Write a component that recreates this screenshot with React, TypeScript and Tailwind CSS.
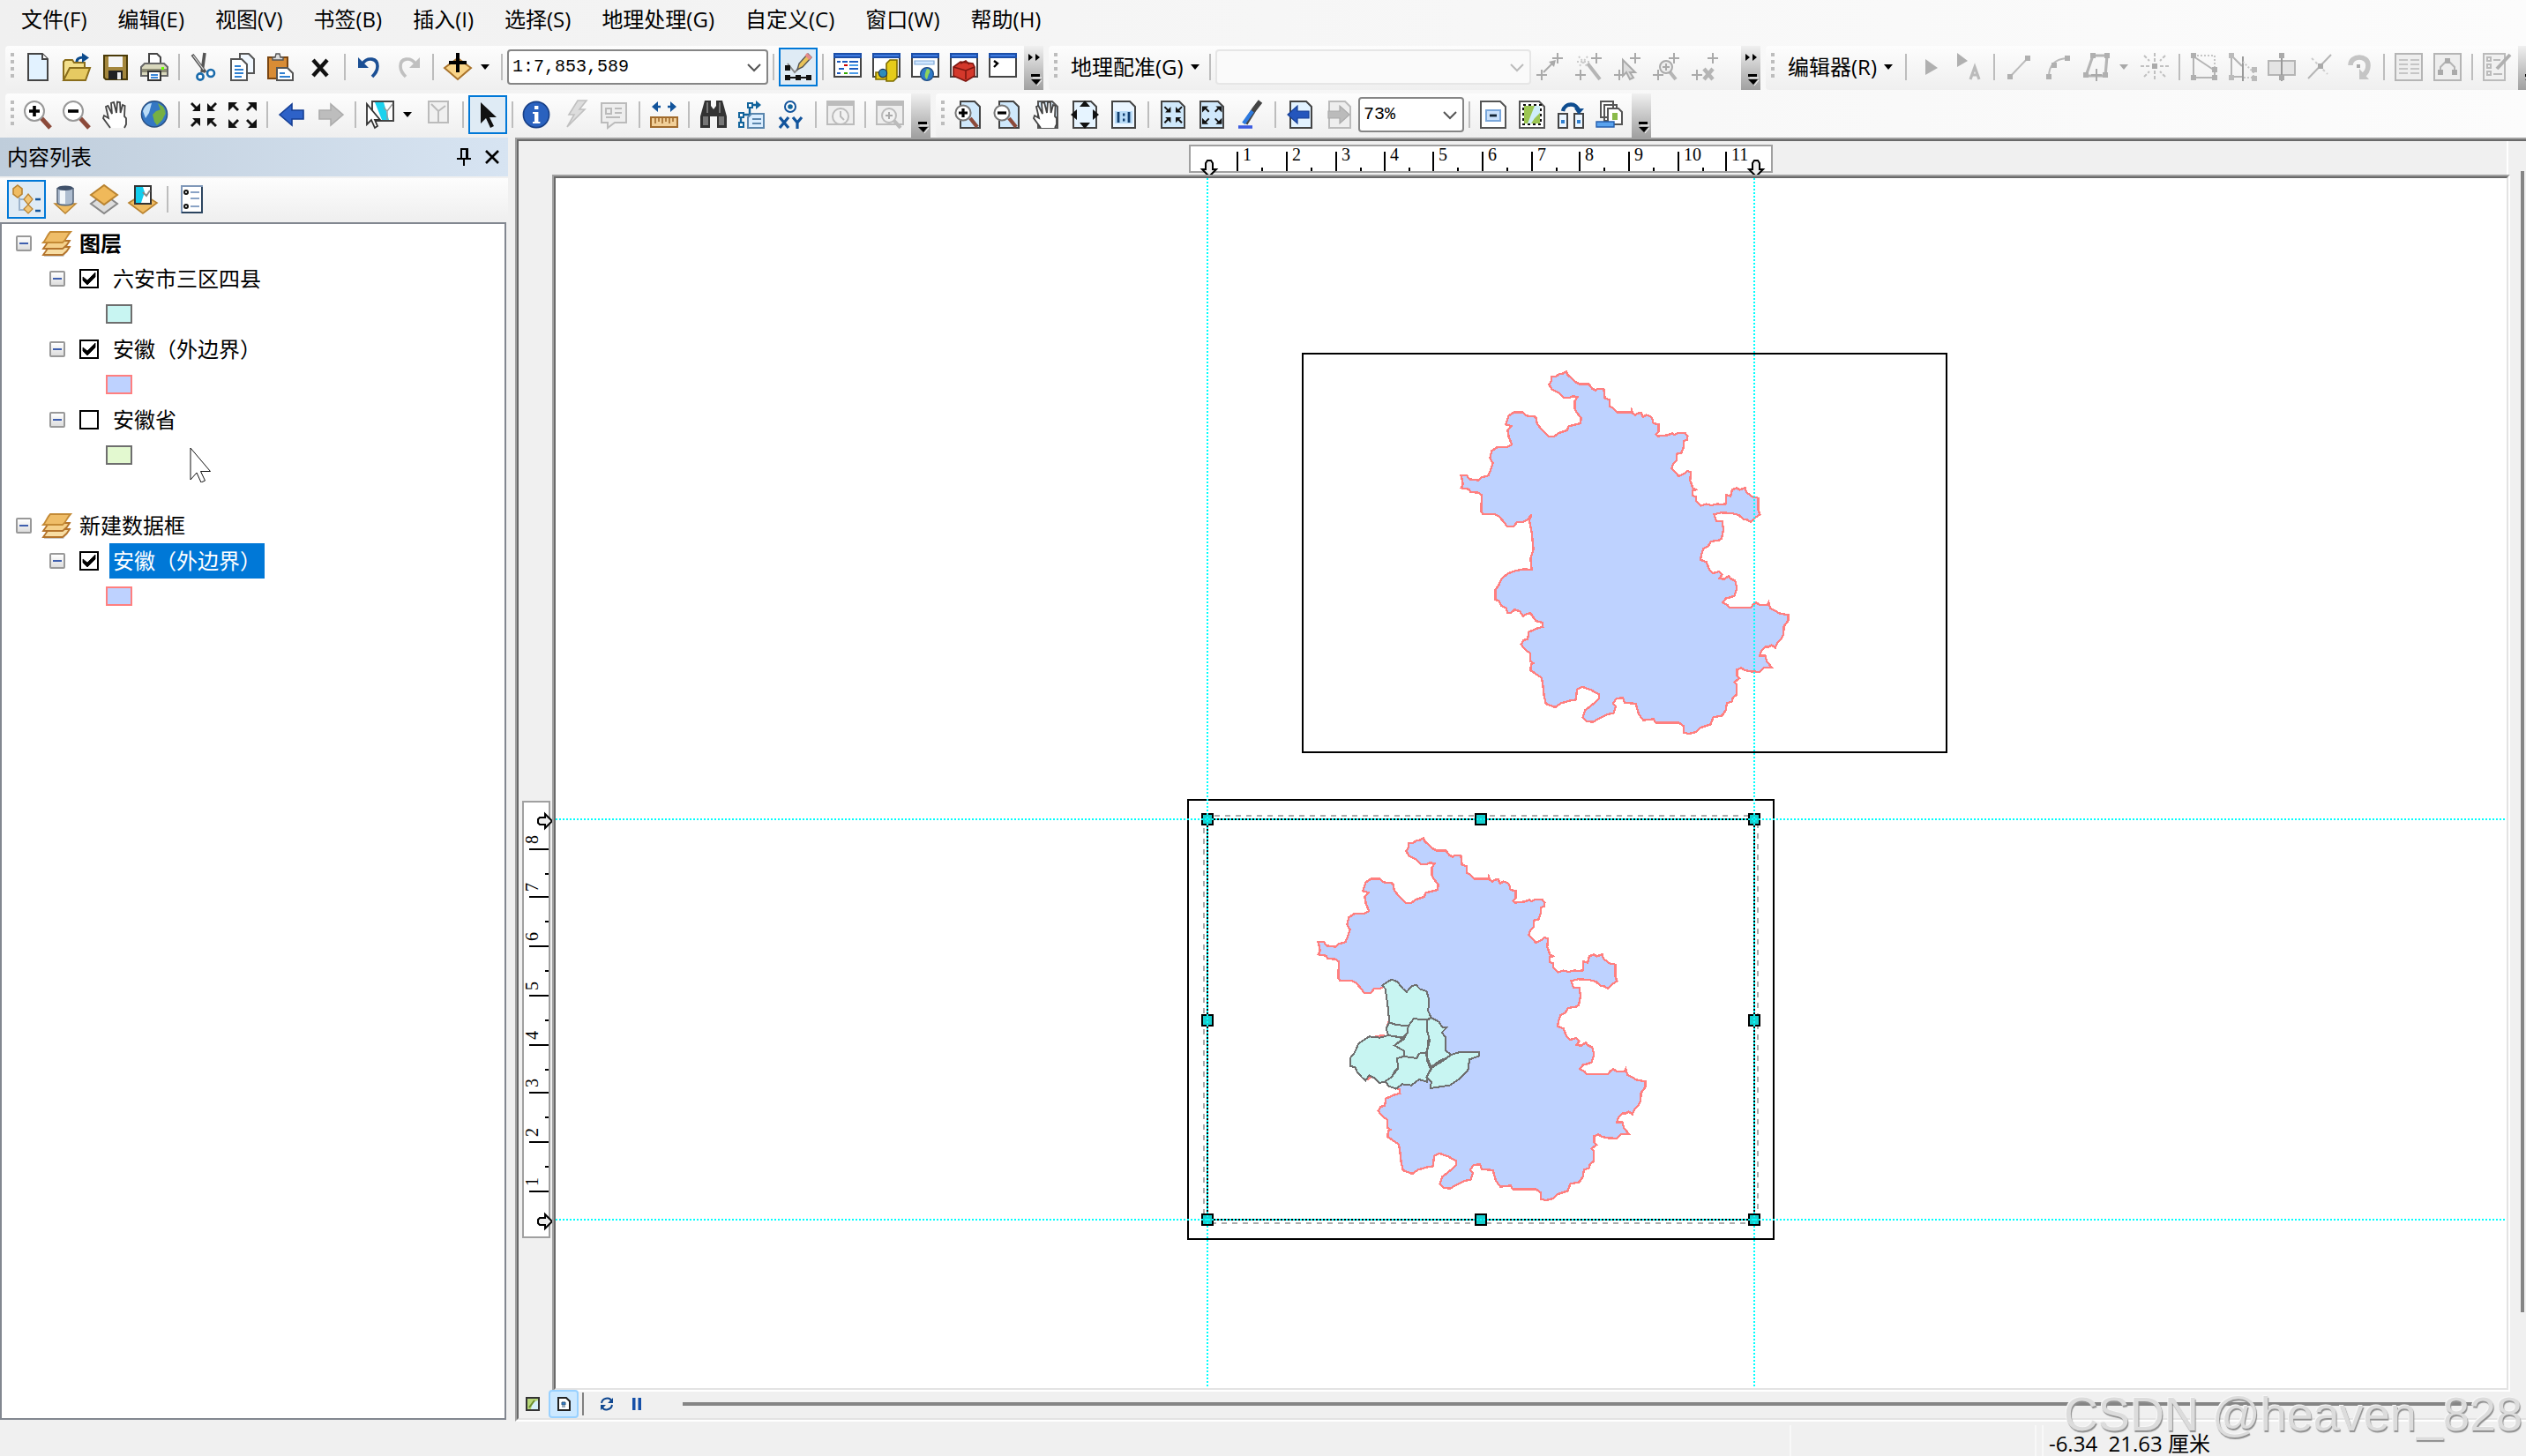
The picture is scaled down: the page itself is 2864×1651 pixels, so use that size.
import { ReactNode, useState } from "react";

const ANHUI =
  "M349,108 356,98 356,82 372,80 386,72 398,70 407,64 413,76 427,88 440,100 452,106 484,106 496,122 508,128 514,123 535,123 539,154 554,160 554,182 566,188 580,202 628,202 630,195 634,206 643,212 650,206 662,204 668,218 680,212 692,216 700,224 704,240 721,244 721,268 712,278 718,284 736,282 752,280 768,274 774,280 790,272 812,274 820,284 818,296 808,300 806,322 800,340 784,344 782,368 772,378 765,394 778,406 790,420 810,410 820,402 831,406 829,434 838,460 848,466 836,470 836,486 848,490 850,506 866,520 884,515 902,519 922,514 932,516 950,514 952,484 966,488 972,466 986,460 998,466 1016,460 1020,474 1040,490 1060,494 1060,534 1066,550 1052,560 1036,576 1022,568 1010,566 994,552 970,546 934,544 910,550 918,572 938,574 942,600 936,632 926,638 900,642 890,658 874,666 868,684 864,704 884,712 894,738 906,750 928,744 938,754 928,768 944,770 960,760 966,768 982,776 988,800 980,826 966,832 950,836 940,850 956,858 962,866 1036,866 1044,856 1054,850 1066,858 1092,858 1096,850 1102,870 1124,880 1130,886 1162,892 1162,912 1148,930 1146,958 1138,974 1126,986 1118,1004 1106,994 1098,1000 1086,1000 1072,1012 1066,1030 1084,1030 1090,1050 1106,1070 1080,1072 1066,1086 1036,1084 1016,1080 1002,1072 988,1078 988,1100 996,1108 980,1120 988,1128 986,1164 974,1174 972,1186 954,1192 950,1216 938,1234 908,1240 898,1264 862,1276 850,1290 824,1296 808,1292 806,1270 790,1258 712,1258 704,1246 670,1250 654,1230 644,1194 606,1190 600,1174 578,1176 566,1194 576,1204 568,1226 548,1230 508,1250 500,1256 478,1254 464,1240 472,1216 508,1188 520,1176 518,1162 490,1146 476,1142 462,1136 444,1146 440,1180 418,1184 390,1192 370,1206 338,1194 332,1166 328,1130 324,1106 306,1094 286,1080 288,1060 296,1056 286,1050 284,1022 266,1008 254,992 262,978 276,974 280,950 308,938 328,932 326,918 304,912 286,886 274,888 260,896 250,880 232,874 220,884 208,884 202,868 186,860 178,844 166,840 166,808 178,790 188,768 208,752 226,744 262,736 290,738 286,700 296,670 294,650 290,612 282,570 290,550 276,568 260,576 240,576 230,590 206,590 194,574 178,556 166,550 124,548 118,540 120,484 108,476 82,474 76,464 50,460 56,446 50,418 68,416 78,430 110,434 120,424 142,418 150,400 158,376 148,358 154,334 172,322 208,320 222,312 212,286 208,264 222,250 202,244 212,214 230,202 260,202 272,214 304,218 308,240 322,260 346,284 368,284 380,274 410,264 416,250 440,244 456,240 458,222 442,202 436,190 436,166 446,150 430,148 420,152 398,152 382,136 358,124Z";

const DISTRICTS = [
  "M524,652 538,640 548,632 564,640 578,664 588,674 600,656 612,650 622,664 640,672 646,700 644,740 652,762 640,768 606,766 594,790 560,786 542,778 540,740 536,700 532,664Z",
  "M542,778 534,800 540,822 578,830 590,812 592,790 560,786Z",
  "M540,822 518,830 490,826 462,850 452,880 440,900 440,926 454,932 458,946 470,964 480,976 490,958 504,968 516,984 530,980 548,968 556,944 568,930 562,900 580,894 582,876 556,856 580,832Z",
  "M590,812 592,790 606,766 640,768 646,800 644,850 640,880 620,884 614,900 582,894 582,876 556,856 580,836Z",
  "M652,762 672,776 682,796 692,796 680,812 690,830 690,874 704,888 690,900 672,910 652,930 642,900 642,870 648,840 640,800 642,770Z",
  "M562,900 582,894 614,900 620,884 638,880 642,910 650,936 640,964 640,980 620,972 600,992 576,988 560,1004 540,994 532,978 548,964 566,934Z",
  "M704,888 724,880 777,880 777,892 752,904 748,940 724,972 700,992 650,1002 652,980 640,964 654,932 690,902Z",
];

const windowBox = (
  <>
    <path d="M.5 1.5h15v12H.5z" fill="#fff" stroke="#444" />
    <path d="M0 0h16v3H0z" fill="#1c4fa8" />
    <path d="M1 1h14v1H1z" fill="#3f7be0" />
  </>
);
const grayWindow = (
  <>
    <path d="M.5 1.5h15v12H.5z" fill="#eee" stroke="#bbb" />
    <path d="M0 0h16v3H0z" fill="#bcbcbc" />
  </>
);
const arrowsIn = (
  <path d="M6 6H1.5L3 4.500.5 2l1-1L4 3.500 6 1.500zM10 6h4.500L13 4.500 15.500 2l-1-1L12 3.500 10 1.500zM6 10H1.500L3 11.500.5 14l1 1L4 12.500 6 14.500zM10 10h4.500L13 11.500l2.500 2.500-1 1-2.500-2.500-2 2z" />
);
const arrowsOut = (
  <path d="M0 1h5L3.500 2.500 6 5 5 6 2.500 3.500 0 6zM16 1h-5l1.500 1.500L10 5l1 1 2.500-2.500L16 6zM0 15.500h5L3.500 14 6 11.500l-1-1L2.500 13 0 10.500zM16 15.500h-5l1.500-1.500-2.500-2.500 1-1 2.500 2.500 2.500-2.500z" />
);
const hand = (
  <path
    d="M5 15.500L1 10l.5-1.500L4 10 2.500 3.500l1.200-.5L6 7.500 5.500 1.500 7 1l1.500 6L9 .8l1.500.2.3 6L12 2.500l1.300.5-.3 6 1 1v3.500l-1 2"
    fill="#fff"
    stroke="#444"
    strokeWidth=".9"
  />
);
const control = <path d="M9 3h6M12 0v6M0 12.500h6M3 9.500v6" stroke="#aaa" />;

const icons: Record<string, ReactNode> = {
  newDoc: (
    <>
      <path d="M2.500.5h8l3 3v12h-11z" fill="#e2f2ff" stroke="#444" />
      <path d="M10.500.5v3h3" fill="#fff" stroke="#444" />
    </>
  ),
  open: (
    <>
      <path d="M.5 15V5l1-1h4l1 1.500h6V8" fill="#f3df8b" stroke="#8a6d1b" />
      <path d="M.5 15.500L4 8.500h11.500l-2.500 7z" fill="#e6ca62" stroke="#8a6d1b" />
      <path d="M8 5c0-2 2-2.500 4-2.500" fill="none" stroke="#0b4a8c" strokeWidth="1.600" />
      <path d="M11 0l4 2.700L11 5.500z" fill="#0b4a8c" />
    </>
  ),
  save: (
    <>
      <path d="M1.500 1.500h13v13.500h-12l-1-1z" fill="#a3863c" stroke="#4a3a08" />
      <path d="M4 2h8v6H4z" fill="#f5f5f5" />
      <path d="M4 10h8v5H4z" fill="#222" />
      <path d="M9 11h2v4H9z" fill="#eee" />
    </>
  ),
  print: (
    <>
      <path d="M5 7V.5h4.500l2 2V7" fill="#fff" stroke="#444" />
      <path d="M.5 8l2-2h11l2 2v5H.5z" fill="#d9d8bd" stroke="#666" />
      <path d="M1 9h14v2H1z" fill="#8d8c75" />
      <path d="M4.500 10.500h7v5h-7z" fill="#fff" stroke="#333" />
      <path d="M6 12.500h4M6 14h4" stroke="#3b87d8" />
      <path d="M12 8h1.500v1.500H12z" fill="#6f0" />
    </>
  ),
  cut: (
    <>
      <path d="M1.500 1L9 11M8.500 0L7 11" stroke="#555" strokeWidth="1.800" />
      <path d="M2 1.500l6 8" stroke="#ddd" strokeWidth=".6" />
      <circle cx="6" cy="13.500" r="1.800" fill="#fff" stroke="#1a6bab" strokeWidth="1.300" />
      <circle cx="12" cy="11.500" r="2" fill="#fff" stroke="#1a6bab" strokeWidth="1.300" />
    </>
  ),
  copy: (
    <>
      <path d="M6.500.5h5l3 3v8h-8z" fill="#f1f8ff" stroke="#555" />
      <path d="M1.500 3.500h6l3 3v9h-9z" fill="#fff" stroke="#555" />
      <path d="M3.500 7.500H7M3.500 9.500h5M3.500 11.500h5M3.500 13.500h4" stroke="#2f7fd0" />
    </>
  ),
  paste: (
    <>
      <path d="M.5 2.500h11v12H.5z" fill="#d98c35" stroke="#7a4510" />
      <path d="M3 4V2.500h1.500L5 .5h2l.5 2H9V4z" fill="#ddd" stroke="#555" strokeWidth=".7" />
      <path d="M5.500 8.500h6l3 3v4h-9z" fill="#fff" stroke="#555" />
      <path d="M7 11.500h3M7 13.500h6" stroke="#2f7fd0" />
    </>
  ),
  remove: <path d="M4 4l8 9M12 4l-8 9" stroke="#111" strokeWidth="2.200" />,
  undo: (
    <>
      <path d="M4 6c3-4 8.500-3 8.500 1.500 0 3-1.500 4.500-3 6" fill="none" stroke="#1b4f94" strokeWidth="1.800" />
      <path d="M1.500 2.500v6h6z" fill="#1b4f94" />
    </>
  ),
  redo: (
    <>
      <path d="M12 6c-3-4-8.500-3-8.500 1.500 0 3 1.500 4.500 3 6" fill="none" stroke="#c0c0c0" strokeWidth="1.800" />
      <path d="M14.500 2.500v6h-6z" fill="#c0c0c0" />
    </>
  ),
  addData: (
    <>
      <path d="M.5 8.500L8 3l7.500 5.500L8 15z" fill="#f8d489" stroke="#a9732b" />
      <path d="M8 0v11M3 5.500h10" stroke="#000" strokeWidth="2" />
    </>
  ),
  editorBar: (
    <>
      <path d="M2 6l4 5 4-4" fill="none" stroke="#888" />
      <path d="M7.500 9.500l1-3.500 5-5.500 2 2-5 5.500z" fill="#e9c35a" stroke="#555" strokeWidth=".7" />
      <path d="M13 0l2.800 2.500-1.500 1.500-2.500-2.500z" fill="#e58b8b" />
      <path d="M2 14h12" stroke="#111" />
      <path d="M.5 7h3v3h-3zM.5 12.500h3v3h-3zM6.500 12.500h3v3h-3zM12.500 12.500h3v3h-3z" fill="#111" />
    </>
  ),
  toc: (
    <>
      {windowBox}
      <path d="M2 5h2M5 5h3M9 5h5M3 9h3M9 9h5M2 11.500h2" stroke="#1c5bc0" />
      <path d="M6 7h2" stroke="#c00" />
      <path d="M9 7h5" stroke="#4a9be8" />
      <path d="M6 11.500h2" stroke="#3a0" />
      <path d="M9 11.500h5" stroke="#4a9be8" />
    </>
  ),
  catalog: (
    <>
      {windowBox}
      <path d="M8 6l2-2h4v10l-2 2H8z" fill="#e6cc1a" stroke="#7d6c00" strokeWidth=".8" />
      <path d="M2 11h6v4H2z" fill="#e6cc1a" stroke="#7d6c00" strokeWidth=".8" />
      <circle cx="6" cy="11.500" r="2.300" fill="#2d8cba" stroke="#235" strokeWidth=".6" />
    </>
  ),
  search: (
    <>
      {windowBox}
      <path d="M2 4.500h11v2H2z" fill="#cfe6ff" stroke="#7fa8d8" strokeWidth=".6" />
      <circle cx="9" cy="12" r="3.700" fill="#2e79c9" stroke="#1d4a80" strokeWidth=".6" />
      <path d="M9 9c2 0 2 2 1 3l-1 3c-2-1-1-4 0-6z" fill="#8fd45a" />
    </>
  ),
  toolbox: (
    <>
      {windowBox}
      <path d="M2 8l4-3 7 1 1 2v5l-5 3-7-3z" fill="#d4382b" stroke="#7e1710" strokeWidth=".8" />
      <path d="M2 8l7 2 5-2M9 10v5M6 6l3-1.500 2 2" fill="none" stroke="#7e1710" strokeWidth=".8" />
    </>
  ),
  python: (
    <>
      {windowBox}
      <path d="M3 4.500L5 6 3 8" fill="none" stroke="#000" strokeWidth="1.200" />
    </>
  ),
  zoomIn: (
    <>
      <path d="M10 10l5 5.500" stroke="#8c4a3a" strokeWidth="2.500" />
      <circle cx="6" cy="6" r="5.500" fill="#fff" stroke="#999" />
      <path d="M6 3v6M3 6h6" stroke="#000" strokeWidth="1.800" />
    </>
  ),
  zoomOut: (
    <>
      <path d="M10 10l5 5.500" stroke="#8c4a3a" strokeWidth="2.500" />
      <circle cx="6" cy="6" r="5.500" fill="#fff" stroke="#999" />
      <path d="M3 6h6" stroke="#000" strokeWidth="1.800" />
    </>
  ),
  pan: hand,
  globe: (
    <>
      <circle cx="8" cy="7.700" r="7.300" fill="#3477c4" stroke="#2a4f80" strokeWidth=".7" />
      <path d="M7 8l2-2 3-1 2.500 2-2 4-3 3L8 12zM10 1.500l3 2 1.500 3-3-1z" fill="#76b043" />
      <path d="M1.500 6c1-3 3-4.500 5-4.500L5 7l-2 3z" fill="#b9dcf8" />
    </>
  ),
  fixedIn: <g fill="#111">{arrowsIn}</g>,
  fixedOut: <g fill="#111">{arrowsOut}</g>,
  back: <path d="M1 8l7-6v3.500h6.500v5H8V14z" fill="#2e62c8" stroke="#163f94" strokeWidth=".8" />,
  forward: <path d="M15 8L8 2v3.500H1.500v5H8V14z" fill="#bdbdbd" stroke="#acacac" strokeWidth=".8" />,
  selectFeatures: (
    <>
      <path d="M3.500.5h12v11h-12z" fill="#fff" stroke="#444" />
      <path d="M5 1h5l3 10h-4z" fill="#1bd2ee" />
      <path d="M10 4l2 2 3-4M12 6v5" fill="none" stroke="#999" strokeWidth=".7" />
      <path d="M.5 2v11.500L3 11l2 4.500 1.500-1L5 11h3z" fill="#fff" stroke="#333" strokeWidth=".9" />
    </>
  ),
  clearSelection: (
    <>
      <path d="M2.500.5h11v12h-11z" fill="#f0f0f0" stroke="#bbb" />
      <path d="M4 2l4 4 4-3M8 6v6" fill="none" stroke="#bbb" />
    </>
  ),
  pointer: <path d="M4 1v12l3-3 2.500 5.500 2-1L9 9.500h4z" fill="#111" />,
  identify: (
    <>
      <circle cx="7.500" cy="8" r="7.300" fill="#2a62bf" stroke="#173f86" strokeWidth=".8" />
      <path d="M6.500 3h2.200v2H6.500zM5.500 6.500h3.200V12h1V13H5.500v-1h1V7.500H5.500z" fill="#fff" />
    </>
  ),
  hyperlink: <path d="M9 0h5l-4 5h3L3 15l4-7H4z" fill="#ddd" stroke="#c0c0c0" strokeWidth=".8" />,
  popup: (
    <>
      <path d="M.5 1.500h14v11H8l-4 3v-3H.5z" fill="#eee" stroke="#bbb" />
      <path d="M3 4.500h3v3H3zM8 4.500h4M8 7h4M3 9.500h8" fill="none" stroke="#bbb" />
    </>
  ),
  measure: (
    <>
      <path d="M2 3.500h4M10 3.500h4" stroke="#12549c" strokeWidth="1.300" />
      <path d="M4.500.5v6L1 3.500zM11.500.5v6l3.500-3z" fill="#12549c" />
      <path d="M.5 9.500h15v5.500H.5z" fill="#f1cf98" stroke="#a06a2c" />
      <path d="M3 10v3M5 10v2M7 10v3M9 10v2M11 10v3M13 10v2" stroke="#a06a2c" strokeWidth=".8" />
    </>
  ),
  find: (
    <>
      <path d="M3 0h3.500v3L8 5l1.500-2V0H13l2.500 9v6.500H10V9H6v6.500H.5V9z" fill="#333" />
      <path d="M2 9h3v5H2zM11 9h3v5h-3zM4 1h1v6H4zM11 1h1v6h-1z" fill="#777" />
    </>
  ),
  findRoute: (
    <>
      <path d="M1.500 14V8h5V2.500h4" fill="none" stroke="#12649c" strokeWidth="1.200" />
      <path d="M10 0l3 2.500L10 5z" fill="#12649c" />
      <path d="M.5 7h2.500v2.500H.5zM.5 12.500h2.500v2.500H.5zM5.500 1.500H8V4H5.500z" fill="#fff" stroke="#12649c" />
      <path d="M5.500 9.500l2-2h7v8h-9z" fill="#dbeeff" stroke="#5a86ad" />
      <path d="M8 10.500h5M8 13h5" stroke="#5a86ad" />
    </>
  ),
  goToXY: (
    <>
      <circle cx="7.500" cy="3.500" r="3" fill="#fff" stroke="#12549c" />
      <circle cx="7.500" cy="3.500" r="1.400" fill="#12649c" />
      <path d="M1.500 9.500l5 6M6.500 9.500l-5 6M9 9.500l2.500 3 2.500-3M11.500 12v4" fill="none" stroke="#12549c" strokeWidth="1.600" />
    </>
  ),
  timeSlider: (
    <>
      {grayWindow}
      <circle cx="8" cy="9" r="4.500" fill="#f2f2f2" stroke="#bbb" />
      <path d="M8 6v3l2 2" fill="none" stroke="#bbb" />
    </>
  ),
  viewer: (
    <>
      {grayWindow}
      <path d="M10 11l4 4.500" stroke="#bbb" strokeWidth="2" />
      <circle cx="7.500" cy="8.500" r="4" fill="#f2f2f2" stroke="#bbb" />
      <path d="M7.500 6.500v4M5.500 8.500h4" stroke="#aaa" />
    </>
  ),
  pageZoomIn: (
    <>
      <path d="M3.500.5h8l3 3v12h-11z" fill="#cfe8fb" stroke="#444" />
      <path d="M9 10l4 5" stroke="#8c4a3a" strokeWidth="2.200" />
      <circle cx="5" cy="7" r="4.300" fill="#fff" stroke="#777" />
      <path d="M5 4.500v5M2.500 7h5" stroke="#000" strokeWidth="1.600" />
    </>
  ),
  pageZoomOut: (
    <>
      <path d="M3.500.5h8l3 3v12h-11z" fill="#cfe8fb" stroke="#444" />
      <path d="M9 10l4 5" stroke="#8c4a3a" strokeWidth="2.200" />
      <circle cx="5" cy="7" r="4.300" fill="#fff" stroke="#777" />
      <path d="M2.500 7h5" stroke="#000" strokeWidth="1.600" />
    </>
  ),
  pagePan: (
    <>
      <path d="M3.500.5h8l3 3v12h-11z" fill="#dcefff" stroke="#555" />
      {hand}
    </>
  ),
  pageWhole: (
    <>
      <path d="M1.500.5h10l3 3v12h-13z" fill="#e6f4ff" stroke="#444" />
      <path d="M8 0l3 3.500H5zM8 16l3-3.500H5zM0 8l3.500-3v6zM16 8l-3.500-3v6z" fill="#111" />
    </>
  ),
  page100: (
    <>
      <path d="M1.500.5h10l3 3v12h-13z" fill="#eaf5ff" stroke="#444" />
      <path d="M3 6h10v7H3z" fill="#b9dcf8" />
      <path d="M5 6.500v6M11 6.500v6M7.500 8h1.200M7.500 11h1.200" stroke="#123f70" strokeWidth="1.400" />
    </>
  ),
  pageFixedIn: (
    <>
      <path d="M1.500.5h10l3 3v12h-13z" fill="#cfe8fb" stroke="#444" />
      <g transform="translate(2.500 2.500) scale(.7)" fill="#111">{arrowsIn}</g>
    </>
  ),
  pageFixedOut: (
    <>
      <path d="M1.500.5h10l3 3v12h-13z" fill="#cfe8fb" stroke="#444" />
      <g transform="translate(2.500 2.500) scale(.7)" fill="#111">{arrowsOut}</g>
    </>
  ),
  draftMode: (
    <>
      <path d="M13.500.5L10 5l-5 8" fill="none" stroke="#444" strokeWidth="2.800" />
      <path d="M9 6l-5 7" stroke="#2d7ae0" strokeWidth="2.200" />
      <path d="M1 15h8" stroke="#3b5be0" strokeWidth="1.800" />
    </>
  ),
  pageBack: (
    <>
      <path d="M2.500.5h9l3 3v12h-12z" fill="#e2f2ff" stroke="#444" />
      <path d="M1 8l5.500-5v3H13v4H6.500v3z" fill="#2456bd" stroke="#163f94" strokeWidth=".6" />
    </>
  ),
  pageForward: (
    <>
      <path d="M2.500.5h9l3 3v12h-12z" fill="#eee" stroke="#bbb" />
      <path d="M14 8L8.500 3v3H2v4h6.500v3z" fill="#bbb" stroke="#aaa" strokeWidth=".6" />
    </>
  ),
  toggleDraft: (
    <>
      <path d="M.5.5h11l3 3v12H.5z" fill="#fff" stroke="#555" />
      <path d="M3.500 5.500h8v6h-8z" fill="#c9e0fb" stroke="#7ba8dc" />
      <path d="M5.500 8.500h4" stroke="#123" strokeWidth="1.400" />
    </>
  ),
  focusFrame: (
    <>
      <path d="M.5.5h11l3 3v12H.5z" fill="#fff" stroke="#555" />
      <path d="M3 3h9v10H3z" fill="#9cc653" />
      <path d="M9 3h3v4l-3 3-2 3H5l2-5z" fill="#cfeefa" />
      <path d="M2.500 2.500h10v11h-10z" fill="none" stroke="#111" strokeDasharray="1.500 1.500" />
    </>
  ),
  changeLayout: (
    <>
      <path d="M.5 7.500h5v8h-5zM9.500 7.500h5v8h-5z" fill="#eaf5ff" stroke="#444" />
      <path d="M3 6c1-5 8-5 9 0" fill="none" stroke="#0f4d90" strokeWidth="2.200" />
      <path d="M9.500 4.500h5.500L12 8z" fill="#0f4d90" />
      <path d="M2 11h2v2H2zM11 11h2v2h-2z" fill="#2f7fd0" />
    </>
  ),
  drivenPages: (
    <>
      <path d="M2.500.5h7v9h-7zM4.500 2.500h7v9h-7z" fill="#fff" stroke="#555" />
      <path d="M6.500 4.500h6l2 2v7h-8z" fill="#fff" stroke="#555" />
      <path d="M9 7h3v4H9z" fill="#8aba4a" />
      <path d="M0 12h10v3H0z" fill="#5aa3ee" stroke="#245fae" strokeWidth=".7" />
    </>
  ),
  gLink: (
    <>
      {control}
      <path d="M4 11l6-6" stroke="#aaa" />
      <path d="M11 4l-1 4-3-3z" fill="#aaa" />
    </>
  ),
  gAuto: (
    <>
      {control}
      <path d="M7 6l7 9" stroke="#b5b5b5" strokeWidth="2" />
      <path d="M1 5h8M2 2l5 6M7 2L2 8" stroke="#ccc" strokeDasharray="1 1" />
    </>
  ),
  gSelect: (
    <>
      {control}
      <path d="M5 4v9l2-2 2 4 2-1-2-3h3z" fill="#ddd" stroke="#aaa" />
    </>
  ),
  gZoom: (
    <>
      {control}
      <path d="M9 10l4 5" stroke="#b5b5b5" strokeWidth="2" />
      <circle cx="7.500" cy="8" r="3.500" fill="#eee" stroke="#aaa" />
      <path d="M5.500 8h4M7.500 6v4" stroke="#aaa" />
    </>
  ),
  gDelete: (
    <>
      {control}
      <path d="M7 9l5 6M12 9l-5 6" stroke="#b5b5b5" strokeWidth="2.200" />
    </>
  ),
  ePointer: <path d="M5 3.500v9l7-4z" fill="#b0b0b0" />,
  ePointerA: (
    <>
      <path d="M1 0v8l6-3.500z" fill="#b0b0b0" />
      <path d="M8.500 15l2.500-7 2.500 7M9 12.500h4" fill="none" stroke="#bbb" strokeWidth="1.600" />
    </>
  ),
  eLine: (
    <>
      <path d="M3 13.500L13 3" stroke="#bbb" />
      <path d="M1.500 12h3v3h-3zM11.500 1.500h3v3h-3z" fill="#b0b0b0" />
    </>
  ),
  eArc: (
    <>
      <path d="M3 13.500c0-7 4-10 10-10.500" fill="none" stroke="#bbb" />
      <path d="M1.500 12h3v3h-3zM12 1.500h3v3h-3zM4.500 5.500h3v3h-3z" fill="#b0b0b0" />
    </>
  ),
  eTrace: (
    <>
      <path d="M2 13L6 1.500h8L13 13H2" fill="none" stroke="#b5b5b5" strokeWidth="1.600" />
      <path d="M4.500 0h3v3h-3zM12.500 0h3v3h-3zM11.500 11h3v3h-3zM.5 11h3v3h-3z" fill="#b0b0b0" />
      <path d="M8 9v7M5 12.500h6" stroke="#aaa" />
    </>
  ),
  ePoint: (
    <>
      <path d="M6.500 6h3v3h-3z" fill="#aaa" />
      <path
        d="M8 0v5M8 10v5M0 7.500h5M11 7.500h5M2 1.500l3 3M14 1.500l-3 3M2 13.500l3-3M14 13.500l-3-3"
        stroke="#c0c0c0"
        strokeDasharray="2 1"
      />
    </>
  ),
  eVertices: (
    <>
      <path d="M2 2l12 8v4H2z" fill="none" stroke="#b5b5b5" />
      <path d="M2 1.500h12V9" fill="none" stroke="#c5c5c5" strokeDasharray="1 1" />
      <path d="M.5 0h3v3h-3zM12.500 8h3v3h-3zM12.500 12.500h3v3h-3zM.5 12.500h3v3h-3z" fill="#b0b0b0" />
    </>
  ),
  eReshape: (
    <>
      <path d="M1.500 1.500v12h6M1.500 1.500l6 6" fill="none" stroke="#b5b5b5" />
      <path d="M8 2v14" stroke="#999" />
      <path d="M8 5l6 6v3H8" fill="none" stroke="#c5c5c5" strokeDasharray="1 1" />
      <path d="M0 0h3v3H0zM0 12.500h3v3H0zM13 8h3v3h-3zM13 13h3v3h-3z" fill="#bbb" />
    </>
  ),
  eCut: (
    <>
      <path d="M.5 4.500h15v8H.5z" fill="#e4e4e4" stroke="#b5b5b5" />
      <path d="M8 0v16" stroke="#999" />
      <path d="M6.500 0h3v3h-3zM6.500 12.500h3v3h-3z" fill="#aaa" />
    </>
  ),
  eSplit: (
    <>
      <path d="M1 14.500L14 1" stroke="#b5b5b5" />
      <path d="M3 3l9 9" stroke="#ccc" strokeDasharray="1.500 1.500" />
      <path d="M6.500 6h3v3h-3z" fill="#aaa" />
    </>
  ),
  eRotate: (
    <>
      <path d="M3 7c0-6 10-6 10 0 0 3-1 4-3 6" fill="none" stroke="#c5c5c5" strokeWidth="2.800" />
      <path d="M13.500 15H8V9z" fill="#c5c5c5" />
      <path d="M6.500 6.500h2v2h-2z" fill="#aaa" />
    </>
  ),
  eAttributes: (
    <>
      <path d="M.5.5h15v15H.5z" fill="#eee" stroke="#b5b5b5" />
      <path
        d="M2.500 4h5M2.500 6.500h5M2.500 9h5M2.500 11.500h5M9 4h5M9 6.500h5M9 9h5M9 11.500h5"
        stroke="#c5c5c5"
      />
    </>
  ),
  eSketch: (
    <>
      <path d="M.5.5h15v15H.5z" fill="#eee" stroke="#b5b5b5" />
      <path d="M4 11V8l4-4 4 4v3" fill="none" stroke="#b5b5b5" />
      <path d="M2.500 9.500h3v3h-3zM6.500 3h3v3h-3zM10.500 9.500h3v3h-3z" fill="#aaa" />
    </>
  ),
  eCreate: (
    <>
      <path d="M.5.5h12v15H.5z" fill="#f0f0f0" stroke="#bbb" />
      <path d="M2.500 2.500h2v2h-2zM2.500 6.500h2v2h-2zM2.500 10.500h2v2h-2zM6 4h4M6 12h5" fill="none" stroke="#bbb" />
      <path d="M8 9l7.500-8" stroke="#b0b0b0" strokeWidth="2" />
    </>
  ),
  byOrder: (
    <>
      <path d="M4 7v7h4M4 8h4" fill="none" stroke="#9db4cc" />
      <path d="M3 0l2.500 2v3L3 7 .5 5V2z" fill="#f0bc62" stroke="#b98330" strokeWidth=".8" />
      <path d="M9 5l2.500 3L9 11 6.500 8zM9 11l2.500 2.500L9 16l-2.500-2.500z" fill="#f4c878" stroke="#b98330" strokeWidth=".6" />
      <path d="M13 8h3M13 14.500h3" stroke="#12549c" strokeWidth="1.200" />
    </>
  ),
  bySource: (
    <>
      <path d="M2 10.500h12L8 16z" fill="#f0bc62" stroke="#b98330" strokeWidth=".7" />
      <path d="M3.500 1.500v8c0 2.500 9 2.500 9 0v-8" fill="#aebdd0" stroke="#5b6a7d" strokeWidth=".8" />
      <path d="M5 3h3v7.500H5z" fill="#f2f6fa" />
      <ellipse cx="8" cy="1.600" rx="4.500" ry="1.400" fill="#40516a" />
    </>
  ),
  byVisibility: (
    <>
      <path d="M.5 10.500L8 5l7.500 5.500L8 16z" fill="#ddd" stroke="#888" />
      <path d="M.5 5.500L8 0l7.500 5.500L8 11z" fill="#f0b95a" stroke="#b98330" />
    </>
  ),
  bySelection: (
    <>
      <path d="M0 10l8-5 8 5-8 6z" fill="#f0bc62" stroke="#b98330" strokeWidth=".8" />
      <path d="M3.500.5h9v10h-9z" fill="#fff" stroke="#333" />
      <path d="M4 1h4l1 3-2 6H4z" fill="#12cdee" />
      <path d="M8 4l2 2 2-3" fill="none" stroke="#888" />
    </>
  ),
  options: (
    <>
      <path d="M2 .5h11.500v15H2z" fill="#fff" stroke="#7f97b8" />
      <path d="M13.500 1v14.500H2" fill="none" stroke="#2c4560" />
      <circle cx="4.500" cy="4" r="1" fill="none" stroke="#111" />
      <circle cx="4.500" cy="12" r="1" fill="none" stroke="#111" />
      <path d="M7 4h5M7 7.500h5M7 12h5" stroke="#8aa3c6" />
    </>
  ),
  layers: (
    <>
      <path d="M1 13.500h11L15.500 9v1.500L12 15.500H1z" fill="#c9c9c9" />
      <path d="M.5 14.500c1-1.500 2-2.500 3-4.500h12c-1 2-2.500 3.500-4 4.500z" fill="#f7dda4" stroke="#b4742c" strokeWidth=".9" />
      <path d="M.5 11c1-1.500 2-2.500 3-4.500h12c-1 2-2.500 3.500-4 4.500z" fill="#f5d08a" stroke="#b4742c" strokeWidth=".9" />
      <path d="M.5 7.500c1.500-1.500 2-4 4-6h11.500c-2 2-2.500 4.500-4.500 6z" fill="#efbd68" stroke="#c48a35" strokeWidth=".9" />
    </>
  ),
};

const Icon = ({ name }: { name: string }) => (
  <svg viewBox="0 0 16 16" className="h-8 w-8 shrink-0 overflow-visible" aria-hidden="true">
    {icons[name]}
  </svg>
);

const Tool = ({ name, active }: { name: string; active?: boolean }) => (
  <button
    aria-label={name}
    className={
      active
        ? "flex h-11 w-11 shrink-0 items-center justify-center border-2 border-[#0078d7] bg-[#dfebf5]"
        : "flex h-11 w-11 shrink-0 items-center justify-center"
    }
  >
    <Icon name={name} />
  </button>
);

const Tools = ({ names }: { names: string[] }) => (
  <>
    {names.map((name) => (
      <Tool key={name} name={name} />
    ))}
  </>
);

const Sep = () => (
  <div className="flex h-11 w-3 shrink-0 items-center justify-center">
    <div className="h-[30px] w-0.5 bg-[#bdbdbd]" />
  </div>
);

const Caret = ({ muted }: { muted?: boolean }) => (
  <svg viewBox="0 0 10 6" className="h-1.5 w-2.5 shrink-0" aria-hidden="true">
    <path d="M0 0h10L5 6z" fill={muted ? "#a8a8a8" : "#000"} />
  </svg>
);

const DropArrow = ({ muted }: { muted?: boolean }) => (
  <button aria-label="more" className="flex h-11 w-[22px] shrink-0 items-center pl-1">
    <Caret muted={muted} />
  </button>
);

const Overflow = ({ chevrons }: { chevrons?: boolean }) => (
  <button
    aria-label="toolbar options"
    className="ml-0.5 h-[50px] w-[22px] shrink-0 self-start bg-linear-to-b from-[#f0f0f0] to-[#a0a0a0]"
  >
    <svg viewBox="0 0 22 50" className="h-full w-full">
      {chevrons && <path d="M5 9l5 4-5 4zM13 9l5 4-5 4z" fill="#000" />}
      <path d="M8 32h10v3H8zM8 38h11l-5 6z" fill="#000" />
      <path d="M10 36h10M15 45l5-6" stroke="#fff" />
    </svg>
  </button>
);

const Toolbar = ({ children, label }: { children: ReactNode; label: string }) => (
  <div
    role="toolbar"
    aria-label={label}
    className="flex h-[50px] shrink-0 rounded-l bg-linear-to-b from-[#fdfdfd] to-[#efefef] pt-0.5"
  >
    <div className="flex w-[15px] shrink-0 flex-col gap-1 pt-1.5 pl-1.5">
      <i className="h-1 w-1 bg-[#bdbdbd]" />
      <i className="h-1 w-1 bg-[#bdbdbd]" />
      <i className="h-1 w-1 bg-[#bdbdbd]" />
      <i className="h-1 w-1 bg-[#bdbdbd]" />
    </div>
    {children}
  </div>
);

interface ComboProps {
  label: string;
  value: string;
  width: string;
  disabled?: boolean;
}

const Combo = ({ label, value, width, disabled }: ComboProps) => (
  <div className={"relative mt-0.5 h-10 shrink-0 " + width}>
    <select
      aria-label={label}
      disabled={disabled}
      className={
        disabled
          ? "h-full w-full appearance-none rounded-sm border-2 border-[#e6e6e6] bg-[#fafafa]"
          : "h-full w-full appearance-none rounded-sm border-2 border-[#858585] bg-white pl-1 font-['Liberation_Mono',monospace] text-xl text-black"
      }
    >
      <option>{value}</option>
    </select>
    <svg viewBox="0 0 16 10" className="pointer-events-none absolute top-4 right-2 h-2.5 w-4" aria-hidden="true">
      <path d="M1 1l7 7 7-7" fill="none" stroke={disabled ? "#bbb" : "#555"} strokeWidth="2" />
    </svg>
  </div>
);

const menus = [
  "文件(F)",
  "编辑(E)",
  "视图(V)",
  "书签(B)",
  "插入(I)",
  "选择(S)",
  "地理处理(G)",
  "自定义(C)",
  "窗口(W)",
  "帮助(H)",
];

const Toolbars = () => (
  <div className="flex flex-col gap-1 overflow-hidden pl-1.5">
    <div className="flex gap-1.5">
      <Toolbar label="标准工具">
        <Tools names={["newDoc", "open", "save", "print"]} />
        <Sep />
        <Tools names={["cut", "copy", "paste", "remove"]} />
        <Sep />
        <Tools names={["undo", "redo"]} />
        <Sep />
        <Tool name="addData" />
        <DropArrow />
        <Sep />
        <Combo label="地图比例" value="1:7,853,589" width="w-[296px]" />
        <Sep />
        <Tool name="editorBar" active />
        <Sep />
        <Tools names={["toc", "catalog", "search", "toolbox", "python"]} />
        <div className="-mt-0.5">
          <Overflow chevrons />
        </div>
      </Toolbar>
      <Toolbar label="地理配准">
        <button className="flex h-11 w-[162px] items-center gap-2 pl-2.5 whitespace-nowrap">
          地理配准(G)
          <Caret />
        </button>
        <Sep />
        <Combo label="配准图层" value="" width="w-[358px]" disabled />
        <Tools names={["gLink", "gAuto", "gSelect", "gZoom", "gDelete"]} />
        <div className="-mt-0.5 pl-4">
          <Overflow chevrons />
        </div>
      </Toolbar>
      <Toolbar label="编辑器">
        <button className="flex h-11 w-[138px] items-center gap-2 pl-2.5 whitespace-nowrap">
          编辑器(R)
          <Caret />
        </button>
        <Sep />
        <Tools names={["ePointer", "ePointerA"]} />
        <Sep />
        <Tools names={["eLine", "eArc", "eTrace"]} />
        <DropArrow muted />
        <Tool name="ePoint" />
        <Sep />
        <Tools names={["eVertices", "eReshape", "eCut", "eSplit", "eRotate"]} />
        <Sep />
        <Tools names={["eAttributes", "eSketch"]} />
        <Sep />
        <Tool name="eCreate" />
        <div className="-mt-0.5">
          <Overflow />
        </div>
      </Toolbar>
    </div>
    <div className="flex gap-1.5">
      <Toolbar label="工具">
        <Tools names={["zoomIn", "zoomOut", "pan", "globe"]} />
        <Sep />
        <Tools names={["fixedIn", "fixedOut"]} />
        <Sep />
        <Tools names={["back", "forward"]} />
        <Sep />
        <Tool name="selectFeatures" />
        <DropArrow />
        <Tool name="clearSelection" />
        <Sep />
        <Tool name="pointer" active />
        <Sep />
        <Tools names={["identify", "hyperlink", "popup"]} />
        <Sep />
        <Tool name="measure" />
        <Sep />
        <Tools names={["find", "findRoute", "goToXY"]} />
        <Sep />
        <Tool name="timeSlider" />
        <Sep />
        <Tool name="viewer" />
        <div className="-mt-0.5">
          <Overflow />
        </div>
      </Toolbar>
      <Toolbar label="布局">
        <Tools names={["pageZoomIn", "pageZoomOut", "pagePan", "pageWhole", "page100"]} />
        <Sep />
        <Tools names={["pageFixedIn", "pageFixedOut", "draftMode"]} />
        <Sep />
        <Tools names={["pageBack", "pageForward"]} />
        <Combo label="缩放至百分比" value="73%" width="w-[120px]" />
        <Sep />
        <Tools names={["toggleDraft", "focusFrame", "changeLayout", "drivenPages"]} />
        <div className="-mt-0.5">
          <Overflow />
        </div>
      </Toolbar>
    </div>
  </div>
);

const Expander = () => (
  <button
    aria-label="collapse"
    className="flex h-[18px] w-[18px] shrink-0 items-center justify-center rounded-xs border-2 border-[#999] bg-linear-to-b from-white to-[#ddd]"
  >
    <span className="h-0.5 w-2.5 bg-[#3f5fae]" />
  </button>
);

const GroupRow = ({ name, bold }: { name: string; bold?: boolean }) => (
  <li className="flex h-10 items-center pl-4">
    <Expander />
    <span className="ml-3">
      <Icon name="layers" />
    </span>
    <span className={bold ? "ml-2.5 font-bold" : "ml-2.5"}>{name}</span>
  </li>
);

interface LayerProps {
  id: string;
  name: string;
  swatch: string;
  visible?: boolean;
  selected?: boolean;
}

const LayerRow = ({ id, name, swatch, visible, selected }: LayerProps) => {
  const [checked, setChecked] = useState(!!visible);

  return (
    <li>
      <div className="flex h-10 items-center pl-[54px]">
        <Expander />
        <div className="relative ml-4 h-[22px] w-[22px]">
          <input
            id={id}
            type="checkbox"
            checked={checked}
            onChange={() => setChecked(!checked)}
            className="block h-full w-full appearance-none border-2 border-black bg-white"
          />
          {checked && (
            <svg viewBox="0 0 11 11" className="pointer-events-none absolute inset-0 h-full w-full">
              <path d="M2 4.500l2.500 2L9 2v2.500L4.500 9 2 6.500z" fill="#000" stroke="#000" strokeWidth=".4" />
            </svg>
          )}
        </div>
        <label
          htmlFor={id}
          className={selected ? "ml-3 flex h-10 items-center bg-[#0078d7] pr-1 pl-1 text-white" : "ml-4"}
        >
          {name}
        </label>
      </div>
      <div className="flex h-10 items-center pl-[118px]">
        <span className={"h-[22px] w-[30px] border-2 " + swatch} />
      </div>
    </li>
  );
};

const ContentsPanel = () => (
  <aside className="flex w-[576px] shrink-0 flex-col">
    <div className="flex h-11 items-center bg-linear-to-r from-[#bfcddb] to-[#d7e4f2] pr-1.5 pl-2">
      <h2 className="flex-1">内容列表</h2>
      <button aria-label="pin" className="mr-2 p-1">
        <svg viewBox="0 0 8 10" className="h-5 w-4">
          <path d="M2.500 0v5.500M6 0v5.500M2 .5h4M0 6h8M4 6v4M5.500 0v6" fill="none" stroke="#000" />
        </svg>
      </button>
      <button aria-label="close" className="p-1">
        <svg viewBox="0 0 8 8" className="h-4 w-4">
          <path d="M.5.5l7 7M7.500.5l-7 7" stroke="#000" strokeWidth="1.300" />
        </svg>
      </button>
    </div>
    <div className="mt-0.5 flex h-12 bg-linear-to-b from-[#fdfdfd] to-[#efefef] pt-0.5 pl-2">
      <Tool name="byOrder" active />
      <Tools names={["bySource", "byVisibility", "bySelection"]} />
      <Sep />
      <Tool name="options" />
    </div>
    <ul className="relative mt-0.5 mr-0.5 mb-0.5 flex-1 border-2 border-[#828790] bg-white pt-0.5">
      <GroupRow name="图层" bold />
      <LayerRow id="luan" name="六安市三区四县" swatch="border-[#6e6e6e] bg-[#c8f5f2]" visible />
      <LayerRow id="border" name="安徽（外边界）" swatch="border-[#ff7f7f] bg-[#bed2ff]" visible />
      <LayerRow id="province" name="安徽省" swatch="border-[#6e6e6e] bg-[#e3f9d0]" />
      <li className="h-10" />
      <GroupRow name="新建数据框" />
      <LayerRow id="frame-border" name="安徽（外边界）" swatch="border-[#ff7f7f] bg-[#bed2ff]" visible selected />
      <svg viewBox="0 0 26 40" className="absolute top-[253px] left-[213px] h-10 w-[26px]" aria-hidden="true">
        <path d="M1 1v36l7-8 5 11 4.500-2-5-10.500h11z" fill="#fff" stroke="#111" />
      </svg>
    </ul>
  </aside>
);

const topTicks = [1403, 1459, 1515, 1570, 1625, 1681, 1737, 1791, 1847, 1903, 1957];
const leftTicks = [1351, 1295, 1239, 1185, 1129, 1073, 1017, 963];

const TopRuler = () => (
  <svg viewBox="1348 160 664 38" className="ml-[760px] block h-[38px] w-[664px] overflow-visible">
    <rect x="1349" y="165" width="660" height="30" fill="#fff" stroke="#a0a0a0" strokeWidth="2" />
    {topTicks.map((x, i) => (
      <g key={x}>
        <path d={`M${x} 172v22`} stroke="#000" strokeWidth="2" />
        {i < 10 && <path d={`M${x + 28} 190v4`} stroke="#000" strokeWidth="2" />}
        <text x={x + 6} y="182" fontSize="20" fontFamily="Liberation Serif, serif">
          {i + 1}
        </text>
      </g>
    ))}
    {[1371, 1991].map((x) => (
      <path key={x} d={`M${x - 4} 192v-7l2-3h4l2 3v7h4l-8 8-8-8z`} fill="#eee" stroke="#000" strokeWidth="2" />
    ))}
  </svg>
);

const LeftRuler = () => (
  <svg viewBox="588 908 38 498" className="mt-[710px] block h-[498px] w-[38px] overflow-visible">
    <rect x="593" y="909" width="30" height="494" fill="#fff" stroke="#a0a0a0" strokeWidth="2" />
    {leftTicks.map((y, i) => (
      <g key={y}>
        <path d={`M600 ${y}h22`} stroke="#000" strokeWidth="2" />
        <path d={`M618 ${y + 28}h4`} stroke="#000" strokeWidth="2" opacity={i === 0 ? 0 : 1} />
        <text transform={`translate(610 ${y - 6}) rotate(-90)`} fontSize="20" fontFamily="Liberation Serif, serif">
          {i + 1}
        </text>
      </g>
    ))}
    {[931, 1385].map((y) => (
      <path key={y} d={`M618 ${y - 4}h-6l-2 2v4l2 2h6v4l8-8-8-8z`} fill="#eee" stroke="#000" strokeWidth="2" />
    ))}
  </svg>
);

const Province = () => (
  <path d={ANHUI} fill="#bed2ff" stroke="#ff7f7f" strokeWidth="7" shapeRendering="crispEdges" />
);

// Layout page: two data frames, the guides and the selection handles
const MapPage = () => (
  <svg className="absolute inset-0 h-full w-full" role="img" aria-label="布局视图">
    <svg x="-630" y="-202" width="2864" height="1651" overflow="visible">
      <rect x="1477" y="401" width="730" height="452" fill="none" stroke="#000" strokeWidth="2" />
      <svg x="1640" y="400" width="420" height="450" viewBox="0 0 1260 1350">
        <Province />
      </svg>
      <rect x="1347" y="907" width="664" height="498" fill="none" stroke="#000" strokeWidth="2" />
      <rect
        x="1365"
        y="925"
        width="628"
        height="462"
        fill="none"
        stroke="#aaa"
        strokeWidth="2"
        strokeDasharray="6 6"
      />
      <svg x="1478" y="929" width="420" height="450" viewBox="0 0 1260 1350">
        <Province />
      </svg>
      <svg x="1340" y="900" width="680" height="510" viewBox="0 0 1568 1530" preserveAspectRatio="none">
        {DISTRICTS.map((d) => (
          <path
            key={d}
            d={d}
            fill="#c8f5f2"
            stroke="#6e6e6e"
            strokeWidth="2"
            vectorEffect="non-scaling-stroke"
            shapeRendering="crispEdges"
          />
        ))}
      </svg>
      <rect x="1369" y="929" width="620" height="454" fill="none" stroke="#000" strokeWidth="2" />
      {[929, 1157, 1383].map((y) =>
        [1369, 1679, 1989].map(
          (x) =>
            !(x === 1679 && y === 1157) && (
              <rect
                key={x + "-" + y}
                x={x - 6}
                y={y - 6}
                width="12"
                height="12"
                fill="#17cfcf"
                stroke="#000"
                strokeWidth="2"
              />
            )
        )
      )}
    </svg>
    <g stroke="#00ffff" strokeWidth="2" strokeDasharray="2 2">
      <line x1="739" x2="739" y1="0" y2="100%" />
      <line x1="1359" x2="1359" y1="0" y2="100%" />
      <line x1="0" x2="100%" y1="727" y2="727" />
      <line x1="0" x2="100%" y1="1181" y2="1181" />
    </g>
  </svg>
);

const ViewBar = () => (
  <div className="flex h-[30px] items-center pb-0.5 pl-0.5">
    <button aria-label="data view" className="flex w-7 justify-center">
      <svg viewBox="0 0 8 8" className="h-4 w-4">
        <path d="M.5.5h7v7h-7z" fill="#b6d678" stroke="#333" />
        <path d="M4 3l3-1v5H3z" fill="#d5effa" />
        <path d="M2 6l3-4" stroke="#6a8c2c" />
      </svg>
    </button>
    <button
      aria-label="layout view"
      className="ml-1 flex h-8 w-[34px] items-center justify-center rounded border-2 border-[#99d1ff] bg-[#cce8ff]"
    >
      <svg viewBox="0 0 8 8" className="h-4 w-4">
        <path d="M1 .5h4.500l2 2v5H1z" fill="#fff" stroke="#222" />
        <path d="M3 3h2v1.500H3zM3 5.500h2" fill="#2f7fd0" stroke="#357" strokeWidth=".5" />
      </svg>
    </button>
    <div className="ml-1 h-[26px] w-0.5 bg-[#808080]" />
    <button aria-label="refresh" className="ml-4 flex w-5 justify-center">
      <svg viewBox="0 0 16 16" className="h-4 w-4">
        <path d="M2 7c1-6 9-7 11-3M14 9c-1 6-9 7-11 3" fill="none" stroke="#0f4790" strokeWidth="2" />
        <path d="M15 1v6H9zM1 15V9h6z" fill="#0f4790" />
      </svg>
    </button>
    <button aria-label="pause" className="ml-4 flex w-4 justify-center">
      <svg viewBox="0 0 12 14" className="h-3.5 w-3">
        <path d="M1 0h3.500v14H1zM7.500 0H11v14H7.500z" fill="#1650a8" />
      </svg>
    </button>
    <div className="mr-[58px] ml-11 h-1 flex-1 bg-[#858585]" />
  </div>
);

const LayoutView = () => (
  <main className="flex min-w-0 flex-1 border-t-2 border-b-2 border-l-2 border-t-[#a0a0a0] border-b-white border-l-[#a0a0a0]">
    <div className="flex min-w-0 flex-1 flex-col border-t-2 border-b-2 border-l-2 border-t-[#696969] border-b-[#e3e3e3] border-l-[#696969]">
      <div className="flex flex-1">
        <div className="flex min-w-0 flex-1 flex-col">
          <div className="mr-0.5 h-[38px] border-r-2 border-white">
            <TopRuler />
          </div>
          <div className="flex flex-1">
            <div className="w-[38px] shrink-0">
              <LeftRuler />
            </div>
            <div className="flex flex-1 border-2 border-t-[#a0a0a0] border-r-white border-b-white border-l-[#a0a0a0]">
              <div className="relative flex-1 overflow-hidden border-2 border-t-[#696969] border-r-[#e3e3e3] border-b-[#e3e3e3] border-l-[#696969] bg-white">
                <MapPage />
              </div>
            </div>
          </div>
        </div>
        <div className="w-[18px] pt-[34px] pb-[90px] pl-3">
          <div className="h-full w-1 bg-[#858585]" />
        </div>
      </div>
      <ViewBar />
    </div>
  </main>
);

const App = () => {
  return (
    <div className="relative flex h-screen flex-col overflow-hidden bg-[#f0f0f0] font-['Open_Sans','Noto_Sans_CJK_SC',sans-serif] text-2xl leading-8 text-black">
      <header className="bg-linear-to-r from-[#f0f0f0] to-[#fcfcfc]">
        <nav className="flex h-[52px] items-start gap-[35px] pt-1.5 pl-6">
          {menus.map((menu) => (
            <button key={menu} className="whitespace-nowrap">
              {menu}
            </button>
          ))}
        </nav>
        <Toolbars />
      </header>
      <div className="flex min-h-0 flex-1 gap-2">
        <ContentsPanel />
        <LayoutView />
      </div>
      <footer className="flex h-[39px] shrink-0 items-end justify-end pr-[358px] leading-7">
        <div className="h-[35px] w-[280px] border-r-2 border-l-2 border-[#f8f8f8]" />
        <div className="ml-1.5 flex h-[35px] items-end border-l-2 border-[#f8f8f8] pl-1.5 whitespace-pre">
          -6.34  21.63 厘米
        </div>
      </footer>
      <div className="pointer-events-none absolute right-1 bottom-7 font-['Liberation_Sans',sans-serif] text-[54px] leading-10 text-[#dcdcdc] [text-shadow:1px_2px_1px_#8f8f8f,-1px_-1px_0_#f7f7f7]">
        CSDN @heaven_828
      </div>
    </div>
  );
};

export default App;
